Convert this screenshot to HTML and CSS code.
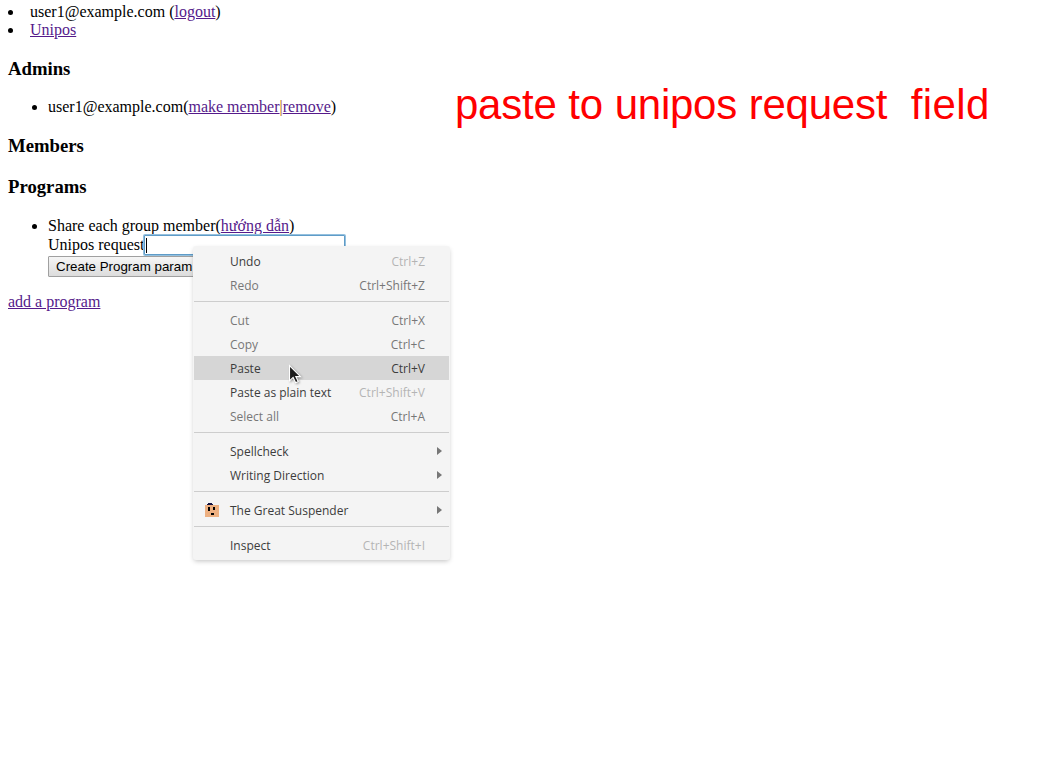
FILE: index.html
```
<!DOCTYPE html>
<html lang="en">
<head>
<meta charset="utf-8">
<title>Unipos</title>
<link rel="stylesheet" href="styles.css">
</head>
<body>
<ul class="nav">
  <li>user1@example.com (<a href="#">logout</a>)</li>
  <li><a href="#">Unipos</a></li>
</ul>
<h3>Admins</h3>
<ul class="list">
  <li>user1@example.com(<a href="#">make member</a><span class="bar">|</span><a href="#">remove</a>)</li>
</ul>
<h3>Members</h3>
<h3>Programs</h3>
<ul class="list">
  <li>Share each group member(<a href="#">hướng dẫn</a>)
    <div class="field"><label>Unipos request</label><span class="input"><span class="caret"></span></span></div>
    <button class="submit">Create Program param</button>
  </li>
</ul>
<a class="add" href="#">add a program</a>

<div class="note">paste to unipos request&nbsp; <span class="last">field</span></div>

<div class="menu">
  <div class="item"><span>Undo</span><span class="off">Ctrl+Z</span></div>
  <div class="item dim"><span>Redo</span><span>Ctrl+Shift+Z</span></div>
  <div class="sep"></div>
  <div class="item dim"><span>Cut</span><span>Ctrl+X</span></div>
  <div class="item dim"><span>Copy</span><span>Ctrl+C</span></div>
  <div class="item active"><span>Paste</span><span>Ctrl+V</span></div>
  <div class="item"><span>Paste as plain text</span><span class="off">Ctrl+Shift+V</span></div>
  <div class="item dim"><span>Select all</span><span>Ctrl+A</span></div>
  <div class="sep"></div>
  <div class="item sub"><span>Spellcheck</span><i class="arrow"></i></div>
  <div class="item sub"><span>Writing Direction</span><i class="arrow"></i></div>
  <div class="sep"></div>
  <div class="item sub"><svg class="face" width="14" height="14" viewBox="0 0 14 14" shape-rendering="crispEdges"><path fill="#edb081" d="M0 2h14v12H0z"/><path fill="#10103f" d="M3 0h4v1h1v1H2V1h1z"/><path d="M3 4h2v4H3zM8 4h2v3H8zM6 10h3v2H6z"/></svg><span>The Great Suspender</span><i class="arrow"></i></div>
  <div class="sep"></div>
  <div class="item"><span>Inspect</span><span class="off">Ctrl+Shift+I</span></div>
</div>

<svg class="cursor" width="16" height="22" viewBox="0 0 16 22"><path d="M1.5 1.5v15.3l3.6-3.4 2.6 5.4 2.5-1.2-2.4-5h4.7z" fill="#1c1c1c" stroke="#fff" stroke-width="1.1"/></svg>
</body>
</html>
```
FILE: styles.css
```
body {
  margin: 0;
  padding: 3px 8px 0;
  height: 755px;
  box-sizing: border-box;
  overflow: hidden;
  background: #fff;
  color: #000;
  font: 16px/18px "Liberation Serif", serif;
}
a { color: #551a8b; text-decoration: underline; }
ul { margin: 0; }
.nav { padding: 0; list-style: disc inside; }
h3 { margin: 19px 0 18px; font-size: 18.72px; line-height: 22px; }
h3 + h3 { margin: 19px 0; }
.list { padding-left: 40px; margin: 16px 0; }
.bar { color: #a50; }
.field { display: flex; height: 21px; }
.field label { line-height: 20px; }
.input {
  box-sizing: border-box;
  width: 201px;
  height: 20px;
  padding: 2px 1px;
  border: 1px solid #5f9cc8;
  box-shadow: 0 0 0 1px #94c0de;
  border-radius: 1px;
  background: #fff;
}
.caret { display: block; width: 1px; height: 15px; background: #000; }
.submit {
  display: block;
  width: 200px;
  height: 21px;
  margin: 0;
  padding: 0 7px;
  border: 1px solid #a0a0a0;
  border-radius: 1px;
  background: linear-gradient(#f6f6f6, #dcdcdc);
  font: 13.33px "Liberation Sans", sans-serif;
  text-align: left;
  color: #000;
}
.note {
  position: absolute;
  left: 455px;
  top: 81px;
  white-space: nowrap;
  color: #f00;
  font: 42px/48px "Liberation Sans", sans-serif;
  letter-spacing: -.25px;
  word-spacing: .4px;
}
.last { letter-spacing: .4px; }
.menu {
  position: absolute;
  left: 194px;
  top: 247px;
  width: 255px;
  height: 312px;
  padding-top: 2px;
  box-sizing: border-box;
  border-radius: 2px;
  background: #f4f4f4;
  box-shadow: 0 0 0 1px #f4f4f4, 0 2px 5px rgba(0, 0, 0, .25);
  font: 12px/26px "Open Sans", "Noto Sans", sans-serif;
  color: #3c3c3c;
}
.item {
  position: relative;
  display: flex;
  justify-content: space-between;
  height: 24px;
  padding: 0 24px 0 36px;
}
.dim { color: #777; }
.off { color: #b4b4b4; }
.active { background: #d6d6d6; }
.sub { padding-right: 7px; }
.sep { height: 1px; margin: 4px 0 6px; background: #cdcdcd; }
.arrow {
  height: 0;
  margin-top: 8px;
  border: solid transparent;
  border-width: 4px 0 4px 5px;
  border-left-color: #777;
}
.face { position: absolute; left: 11px; top: 5px; }
.cursor {
  position: absolute;
  left: 288px;
  top: 364px;
  filter: drop-shadow(1px 1px 1px rgba(0, 0, 0, .35));
}
```
